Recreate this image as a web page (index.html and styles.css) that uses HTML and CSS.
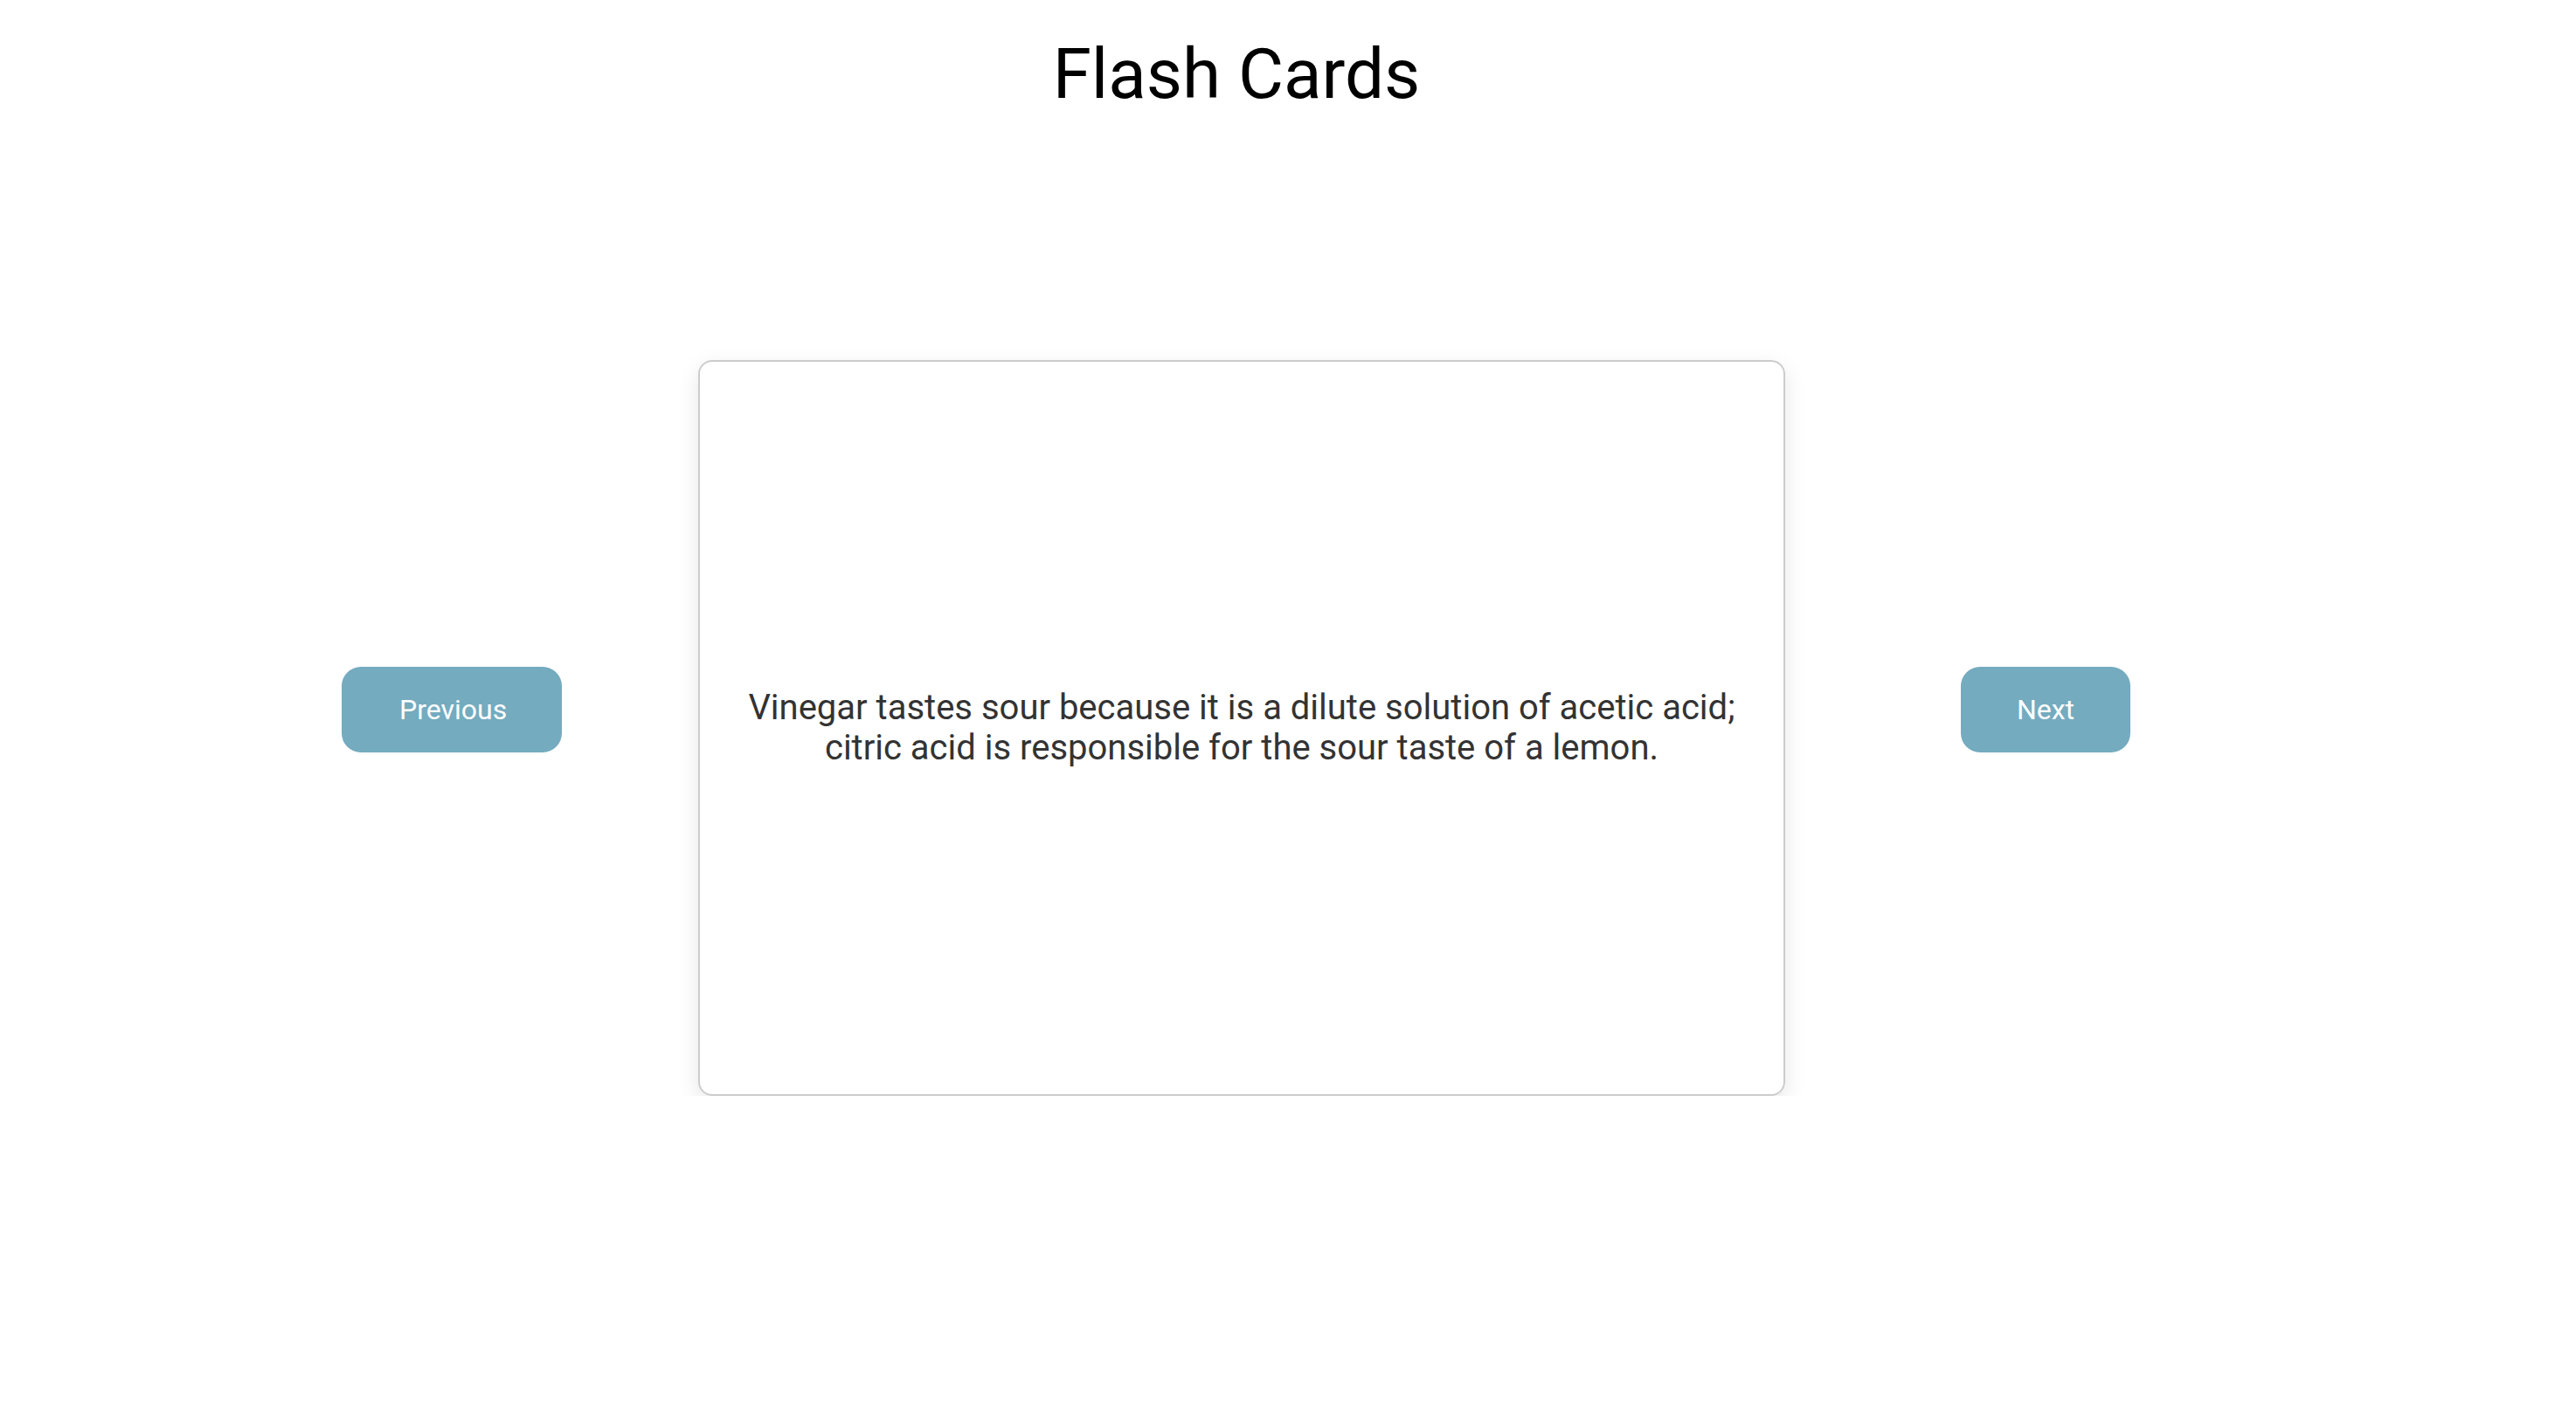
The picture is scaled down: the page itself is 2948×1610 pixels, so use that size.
FILE: index.html
```html
<!DOCTYPE html>
<html>
<head>
<meta charset="utf-8">
<link rel="stylesheet" href="styles.css">
<title>Flash Cards</title>
</head>
<body>
<div class="page">
  <h1 class="title">Flash Cards</h1>
  <div class="stage">
    <button class="nav-btn prev">Previous</button>
    <div class="card">
      <p class="card-text">Vinegar tastes sour because it is a dilute solution of acetic acid; citric acid is responsible for the sour taste of a lemon.</p>
    </div>
    <button class="nav-btn next">Next</button>
  </div>
</div>
</body>
</html>
```
FILE: styles.css
```css
html, body {
  margin: 0;
  padding: 0;
  background: #ffffff;
}
body {
  font-family: Roboto, "Liberation Sans", sans-serif;
}
.page {
  width: 2830px;
}
.title {
  margin: 0;
  padding-top: 30px;
  text-align: center;
  font-weight: 400;
  font-size: 80px;
  line-height: 110px;
  color: #000;
}
.stage {
  display: flex;
  align-items: flex-start;
  margin-top: 272px;
  padding-left: 391px;
}
.nav-btn {
  font-family: Roboto, "Liberation Sans", sans-serif;
  font-size: 32px;
  color: #ffffff;
  background: #74abbf;
  border: none;
  border-radius: 22px;
  height: 98px;
  padding: 0 66px;
  margin-top: 351px;
}
.prev {
  width: 252px;
}
.next {
  width: 194px;
  padding: 0;
}
.card {
  width: 1244px;
  height: 842px;
  box-sizing: border-box;
  margin-left: 156px;
  margin-right: 201px;
  border: 2px solid #cccccc;
  border-radius: 16px;
  box-shadow: 0 8px 24px rgba(0, 0, 0, 0.10);
  display: flex;
  align-items: center;
  justify-content: center;
  padding: 0 40px;
}
.card-text {
  margin: 0;
  text-align: center;
  font-size: 40px;
  line-height: 46px;
  color: #333333;
}
```
